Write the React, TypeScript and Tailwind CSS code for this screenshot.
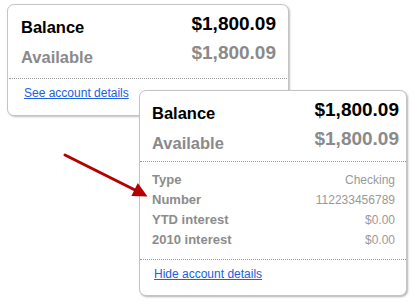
import React from "react";

const font = { fontFamily: '"Liberation Sans", Arial, sans-serif' };

function Summary({ gapAfter }: { gapAfter: string }) {
  return (
    <>
      <div className="flex items-start justify-between">
        <span className="text-[16.5px] leading-[22px] font-bold text-black">Balance</span>
        <span className="text-[19px] leading-[15px] font-bold text-black">$1,800.09</span>
      </div>
      <div className={`mt-[8px] flex items-start justify-between ${gapAfter}`}>
        <span className="text-[16.5px] leading-[22px] font-bold text-[#8a8a8a]">Available</span>
        <span className="text-[19px] leading-[13px] font-bold text-[#8a8a8a]">$1,800.09</span>
      </div>
    </>
  );
}

function Row({ label, value }: { label: string; value: string }) {
  return (
    <div className="flex h-[20px] items-baseline justify-between leading-[20px]">
      <span className="text-[13px] font-bold text-[#8c8c8c]">{label}</span>
      <span className="text-[12px] text-[#999999]">{value}</span>
    </div>
  );
}

export default function App() {
  return (
    <div className="relative h-[303px] w-[416px] overflow-hidden bg-white" style={font}>
      {/* Collapsed card */}
      <div className="ml-[7px] mt-[4px] w-[282px] rounded-[7px] border border-[#c4c4c4] bg-white shadow-[1px_1px_2px_rgba(0,0,0,0.25)]">
        <div className="pl-[13px] pr-[12px] pt-[11px]">
          <Summary gapAfter="mb-[10px]" />
        </div>
        <div className="mx-[1px] border-t border-dotted border-[#9a9a9a]" />
        <div className="flex pl-[16px] pt-[6px] pb-[14px] text-[12px] leading-[16px]">
          <a className="text-[#2060e0] underline" href="#">
            See account details
          </a>
        </div>
      </div>

      {/* Expanded card */}
      <div className="absolute left-[139px] top-[90px] w-[268px] rounded-[7px] border border-[#c4c4c4] bg-white shadow-[1px_1px_2px_rgba(0,0,0,0.3)]">
        <div className="pl-[12px] pr-[7px] pt-[11px]">
          <Summary gapAfter="mb-[7px]" />
        </div>
        <div className="border-t border-dotted border-[#9a9a9a]" />
        <div className="pl-[12px] pr-[11px] pt-[8px] pb-[9px]">
          <Row label="Type" value="Checking" />
          <Row label="Number" value="112233456789" />
          <Row label="YTD interest" value="$0.00" />
          <Row label="2010 interest" value="$0.00" />
        </div>
        <div className="border-t border-dotted border-[#9a9a9a]" />
        <div className="flex pl-[14px] pt-[6px] pb-[13px] text-[12px] leading-[16px]">
          <a className="text-[#2060e0] underline" href="#">
            Hide account details
          </a>
        </div>
      </div>

      {/* Arrow */}
      <svg className="absolute left-0 top-0" width="416" height="303" viewBox="0 0 416 303">
        <line x1="65" y1="155" x2="137" y2="191" stroke="#b40000" strokeWidth="3" strokeLinecap="round" />
        <polygon points="147.5,196.5 131.4,196 137.8,183" fill="#b40000" />
      </svg>
    </div>
  );
}
